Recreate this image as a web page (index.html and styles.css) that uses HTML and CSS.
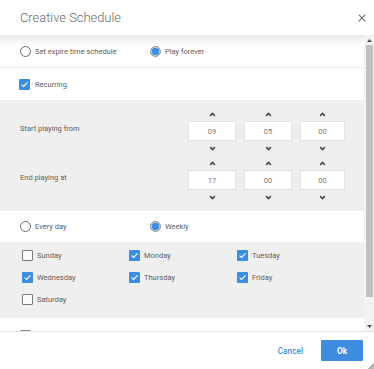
FILE: index.html
```html
<!DOCTYPE html>
<html>
<head>
<meta charset="utf-8">
<link rel="stylesheet" href="styles.css">
</head>
<body>
<div class="dialog">
  <div class="header">
    <div class="title">Creative Schedule</div>
    <svg class="close" width="8" height="8" viewBox="0 0 8 8"><path d="M0.7 0.7 L7.3 7.3 M7.3 0.7 L0.7 7.3" stroke="#6f6f6f" stroke-width="1.2" fill="none"/></svg>
  </div>
  <div class="main">
    <div class="content">
      <div class="row row-first">
        <div class="opt opt-wide"><span class="radio"></span>Set expire time schedule</div>
        <div class="opt"><span class="radio on"></span>Play forever</div>
      </div>
      <div class="row row-rec">
        <div class="opt"><span class="check on"><svg width="11" height="11" viewBox="0 0 11 11"><path d="M2.6 5.6 L4.6 7.5 L8.5 3.4" stroke="#fff" stroke-width="1.1" fill="none"/></svg></span>Recurring</div>
      </div>
      <div class="times">
        <div class="time-row">
          <div class="time-label">Start playing from</div>
          <div class="fields">
            <div class="field">
              <svg class="chev" width="7" height="5" viewBox="0 0 7 5"><path d="M1.2 3.8 L3.5 1.5 L5.8 3.8" stroke="#4a4a4a" stroke-width="1.7" fill="none"/></svg>
              <div class="box">09</div>
              <svg class="chev" width="7" height="5" viewBox="0 0 7 5"><path d="M1.2 1.2 L3.5 3.5 L5.8 1.2" stroke="#4a4a4a" stroke-width="1.7" fill="none"/></svg>
            </div>
            <div class="colon">:</div>
            <div class="field">
              <svg class="chev" width="7" height="5" viewBox="0 0 7 5"><path d="M1.2 3.8 L3.5 1.5 L5.8 3.8" stroke="#4a4a4a" stroke-width="1.7" fill="none"/></svg>
              <div class="box">05</div>
              <svg class="chev" width="7" height="5" viewBox="0 0 7 5"><path d="M1.2 1.2 L3.5 3.5 L5.8 1.2" stroke="#4a4a4a" stroke-width="1.7" fill="none"/></svg>
            </div>
            <div class="colon">:</div>
            <div class="field field-last">
              <svg class="chev" width="7" height="5" viewBox="0 0 7 5"><path d="M1.2 3.8 L3.5 1.5 L5.8 3.8" stroke="#4a4a4a" stroke-width="1.7" fill="none"/></svg>
              <div class="box">00</div>
              <svg class="chev" width="7" height="5" viewBox="0 0 7 5"><path d="M1.2 1.2 L3.5 3.5 L5.8 1.2" stroke="#4a4a4a" stroke-width="1.7" fill="none"/></svg>
            </div>
          </div>
        </div>
        <div class="time-row">
          <div class="time-label">End playing at</div>
          <div class="fields">
            <div class="field">
              <svg class="chev" width="7" height="5" viewBox="0 0 7 5"><path d="M1.2 3.8 L3.5 1.5 L5.8 3.8" stroke="#4a4a4a" stroke-width="1.7" fill="none"/></svg>
              <div class="box">17</div>
              <svg class="chev" width="7" height="5" viewBox="0 0 7 5"><path d="M1.2 1.2 L3.5 3.5 L5.8 1.2" stroke="#4a4a4a" stroke-width="1.7" fill="none"/></svg>
            </div>
            <div class="colon">:</div>
            <div class="field">
              <svg class="chev" width="7" height="5" viewBox="0 0 7 5"><path d="M1.2 3.8 L3.5 1.5 L5.8 3.8" stroke="#4a4a4a" stroke-width="1.7" fill="none"/></svg>
              <div class="box">00</div>
              <svg class="chev" width="7" height="5" viewBox="0 0 7 5"><path d="M1.2 1.2 L3.5 3.5 L5.8 1.2" stroke="#4a4a4a" stroke-width="1.7" fill="none"/></svg>
            </div>
            <div class="colon">:</div>
            <div class="field field-last">
              <svg class="chev" width="7" height="5" viewBox="0 0 7 5"><path d="M1.2 3.8 L3.5 1.5 L5.8 3.8" stroke="#4a4a4a" stroke-width="1.7" fill="none"/></svg>
              <div class="box">00</div>
              <svg class="chev" width="7" height="5" viewBox="0 0 7 5"><path d="M1.2 1.2 L3.5 3.5 L5.8 1.2" stroke="#4a4a4a" stroke-width="1.7" fill="none"/></svg>
            </div>
          </div>
        </div>
      </div>
      <div class="row row-freq">
        <div class="opt opt-wide"><span class="radio"></span>Every day</div>
        <div class="opt"><span class="radio on"></span>Weekly</div>
      </div>
      <div class="days">
        <div class="opt"><span class="check"></span>Sunday</div>
        <div class="opt"><span class="check on"><svg width="11" height="11" viewBox="0 0 11 11"><path d="M2.6 5.6 L4.6 7.5 L8.5 3.4" stroke="#fff" stroke-width="1.1" fill="none"/></svg></span>Monday</div>
        <div class="opt"><span class="check on"><svg width="11" height="11" viewBox="0 0 11 11"><path d="M2.6 5.6 L4.6 7.5 L8.5 3.4" stroke="#fff" stroke-width="1.1" fill="none"/></svg></span>Tuesday</div>
        <div class="opt"><span class="check on"><svg width="11" height="11" viewBox="0 0 11 11"><path d="M2.6 5.6 L4.6 7.5 L8.5 3.4" stroke="#fff" stroke-width="1.1" fill="none"/></svg></span>Wednesday</div>
        <div class="opt"><span class="check on"><svg width="11" height="11" viewBox="0 0 11 11"><path d="M2.6 5.6 L4.6 7.5 L8.5 3.4" stroke="#fff" stroke-width="1.1" fill="none"/></svg></span>Thursday</div>
        <div class="opt"><span class="check on"><svg width="11" height="11" viewBox="0 0 11 11"><path d="M2.6 5.6 L4.6 7.5 L8.5 3.4" stroke="#fff" stroke-width="1.1" fill="none"/></svg></span>Friday</div>
        <div class="opt"><span class="check"></span>Saturday</div>
      </div>
      <div class="row-next">
        <span class="check"></span>
      </div>
    </div>
    <div class="scrollbar">
      <div class="sb-btn"><svg width="5" height="3" viewBox="0 0 5 3"><path d="M0 3 L2.5 0 L5 3 Z" fill="#505050"/></svg></div>
      <div class="sb-thumb"></div>
      <div class="sb-space"></div>
      <div class="sb-btn"><svg width="5" height="3" viewBox="0 0 5 3"><path d="M0 0 L2.5 3 L5 0 Z" fill="#505050"/></svg></div>
    </div>
  </div>
  <div class="footer">
    <div class="cancel">Cancel</div>
    <div class="ok">Ok</div>
  </div>
  <div class="grip"></div>
</div>
</body>
</html>
```

FILE: styles.css
```css
html, body {
  margin: 0;
  padding: 0;
  background: #fff;
}
body {
  font-family: Roboto, "Liberation Sans", Arial, sans-serif;
  color: #616161;
}
.dialog {
  position: relative;
  width: 374px;
  height: 369px;
  overflow: hidden;
  background: #fff;
}
.header {
  height: 35px;
  display: flex;
  align-items: center;
  justify-content: space-between;
  padding: 0 8px 0 20px;
}
.title {
  font-size: 12.9px;
  font-weight: 300;
  color: #6a6a6a;
  line-height: 35px;
}
.close {
  display: block;
  margin-top: 1px;
}
.main {
  height: 296px;
  display: flex;
}
.content {
  flex: 1;
  overflow: hidden;
}
.row {
  display: flex;
  align-items: center;
  padding-left: 20px;
  font-size: 7.5px;
}
.row-first {
  height: 32px;
  border-bottom: 1px solid #ebebeb;
  background: linear-gradient(#e8e8e8, #ffffff 11px);
}
.row-rec {
  height: 32px;
  padding-left: 19px;
}
.row-freq {
  height: 31px;
}
.opt {
  display: flex;
  align-items: center;
  font-size: 7.5px;
  color: #5e5e5e;
}
.opt-wide {
  width: 130px;
}
.radio {
  box-sizing: border-box;
  width: 11px;
  height: 11px;
  border: 1.5px solid #6a6a6a;
  border-radius: 50%;
  margin-right: 4px;
  background: #fff;
}
.radio.on {
  border-color: #9a9a9a;
  background: #3c8ce0;
  box-shadow: inset 0 0 0 0.8px #e6e6e6;
}
.check {
  box-sizing: border-box;
  width: 11px;
  height: 11px;
  border: 1.5px solid #7a7a7a;
  border-radius: 1px;
  margin-right: 5px;
  background: #fafafa;
  display: block;
  flex: none;
}
.check.on {
  border: none;
  background: #3d8de0;
}
.check svg {
  display: block;
}
.times {
  background: #efefef;
  padding: 7px 0;
}
.time-row {
  display: flex;
  align-items: center;
  padding-left: 20px;
}
.time-row + .time-row {
  margin-top: 1px;
}
.time-label {
  width: 168px;
  font-size: 7.5px;
  color: #5e5e5e;
  margin-top: -5px;
}
.fields {
  display: flex;
  align-items: center;
}
.field {
  width: 48px;
  display: flex;
  flex-direction: column;
  align-items: center;
}
.field-last {
  width: 45px;
}
.chev {
  display: block;
  margin: 5px 0 4px;
}
.box {
  box-sizing: border-box;
  width: 100%;
  height: 20px;
  background: #fff;
  border: 1px solid #e3e3e3;
  font-size: 7.5px;
  color: #777;
  display: flex;
  align-items: center;
  justify-content: center;
}
.colon {
  width: 8px;
  text-align: center;
  font-size: 7px;
  color: #aaa;
}
.days {
  background: #efefef;
  padding: 2px 0 8px 22px;
  display: grid;
  grid-template-columns: 107px 108px 1fr;
  grid-auto-rows: 22px;
}
.days .opt {
  height: 22px;
}
.days .check {
  margin-right: 4px;
}
.row-next {
  padding: 12px 0 0 20px;
  height: 20px;
}
.row-next .check {
  border-color: #8a8a8a;
  background: #fff;
}
.scrollbar {
  width: 10px;
  display: flex;
  flex-direction: column;
  background: #f3f3f3;
}
.sb-btn {
  height: 10px;
  display: flex;
  align-items: center;
  justify-content: center;
}
.sb-btn svg {
  display: block;
}
.sb-thumb {
  height: 252px;
  margin: 0 1px 0 2px;
  background: #c1c1c1;
}
.sb-space {
  flex: 1;
}
.footer {
  height: 37px;
  border-top: 1px solid #e4e4e4;
  display: flex;
  align-items: center;
  justify-content: flex-end;
  padding-right: 11px;
}
.cancel {
  font-size: 8.25px;
  font-weight: 500;
  color: #3e8ee0;
  margin-right: 18px;
}
.ok {
  width: 42px;
  height: 21px;
  background: #3d8ce0;
  color: #fff;
  font-size: 8.25px;
  font-weight: 700;
  display: flex;
  align-items: center;
  justify-content: center;
  border-radius: 1px;
}
.grip {
  position: absolute;
  right: 0;
  bottom: 0;
  width: 7px;
  height: 7px;
  background: linear-gradient(135deg, transparent 50%, #b5b5b5 50%);
}
```
